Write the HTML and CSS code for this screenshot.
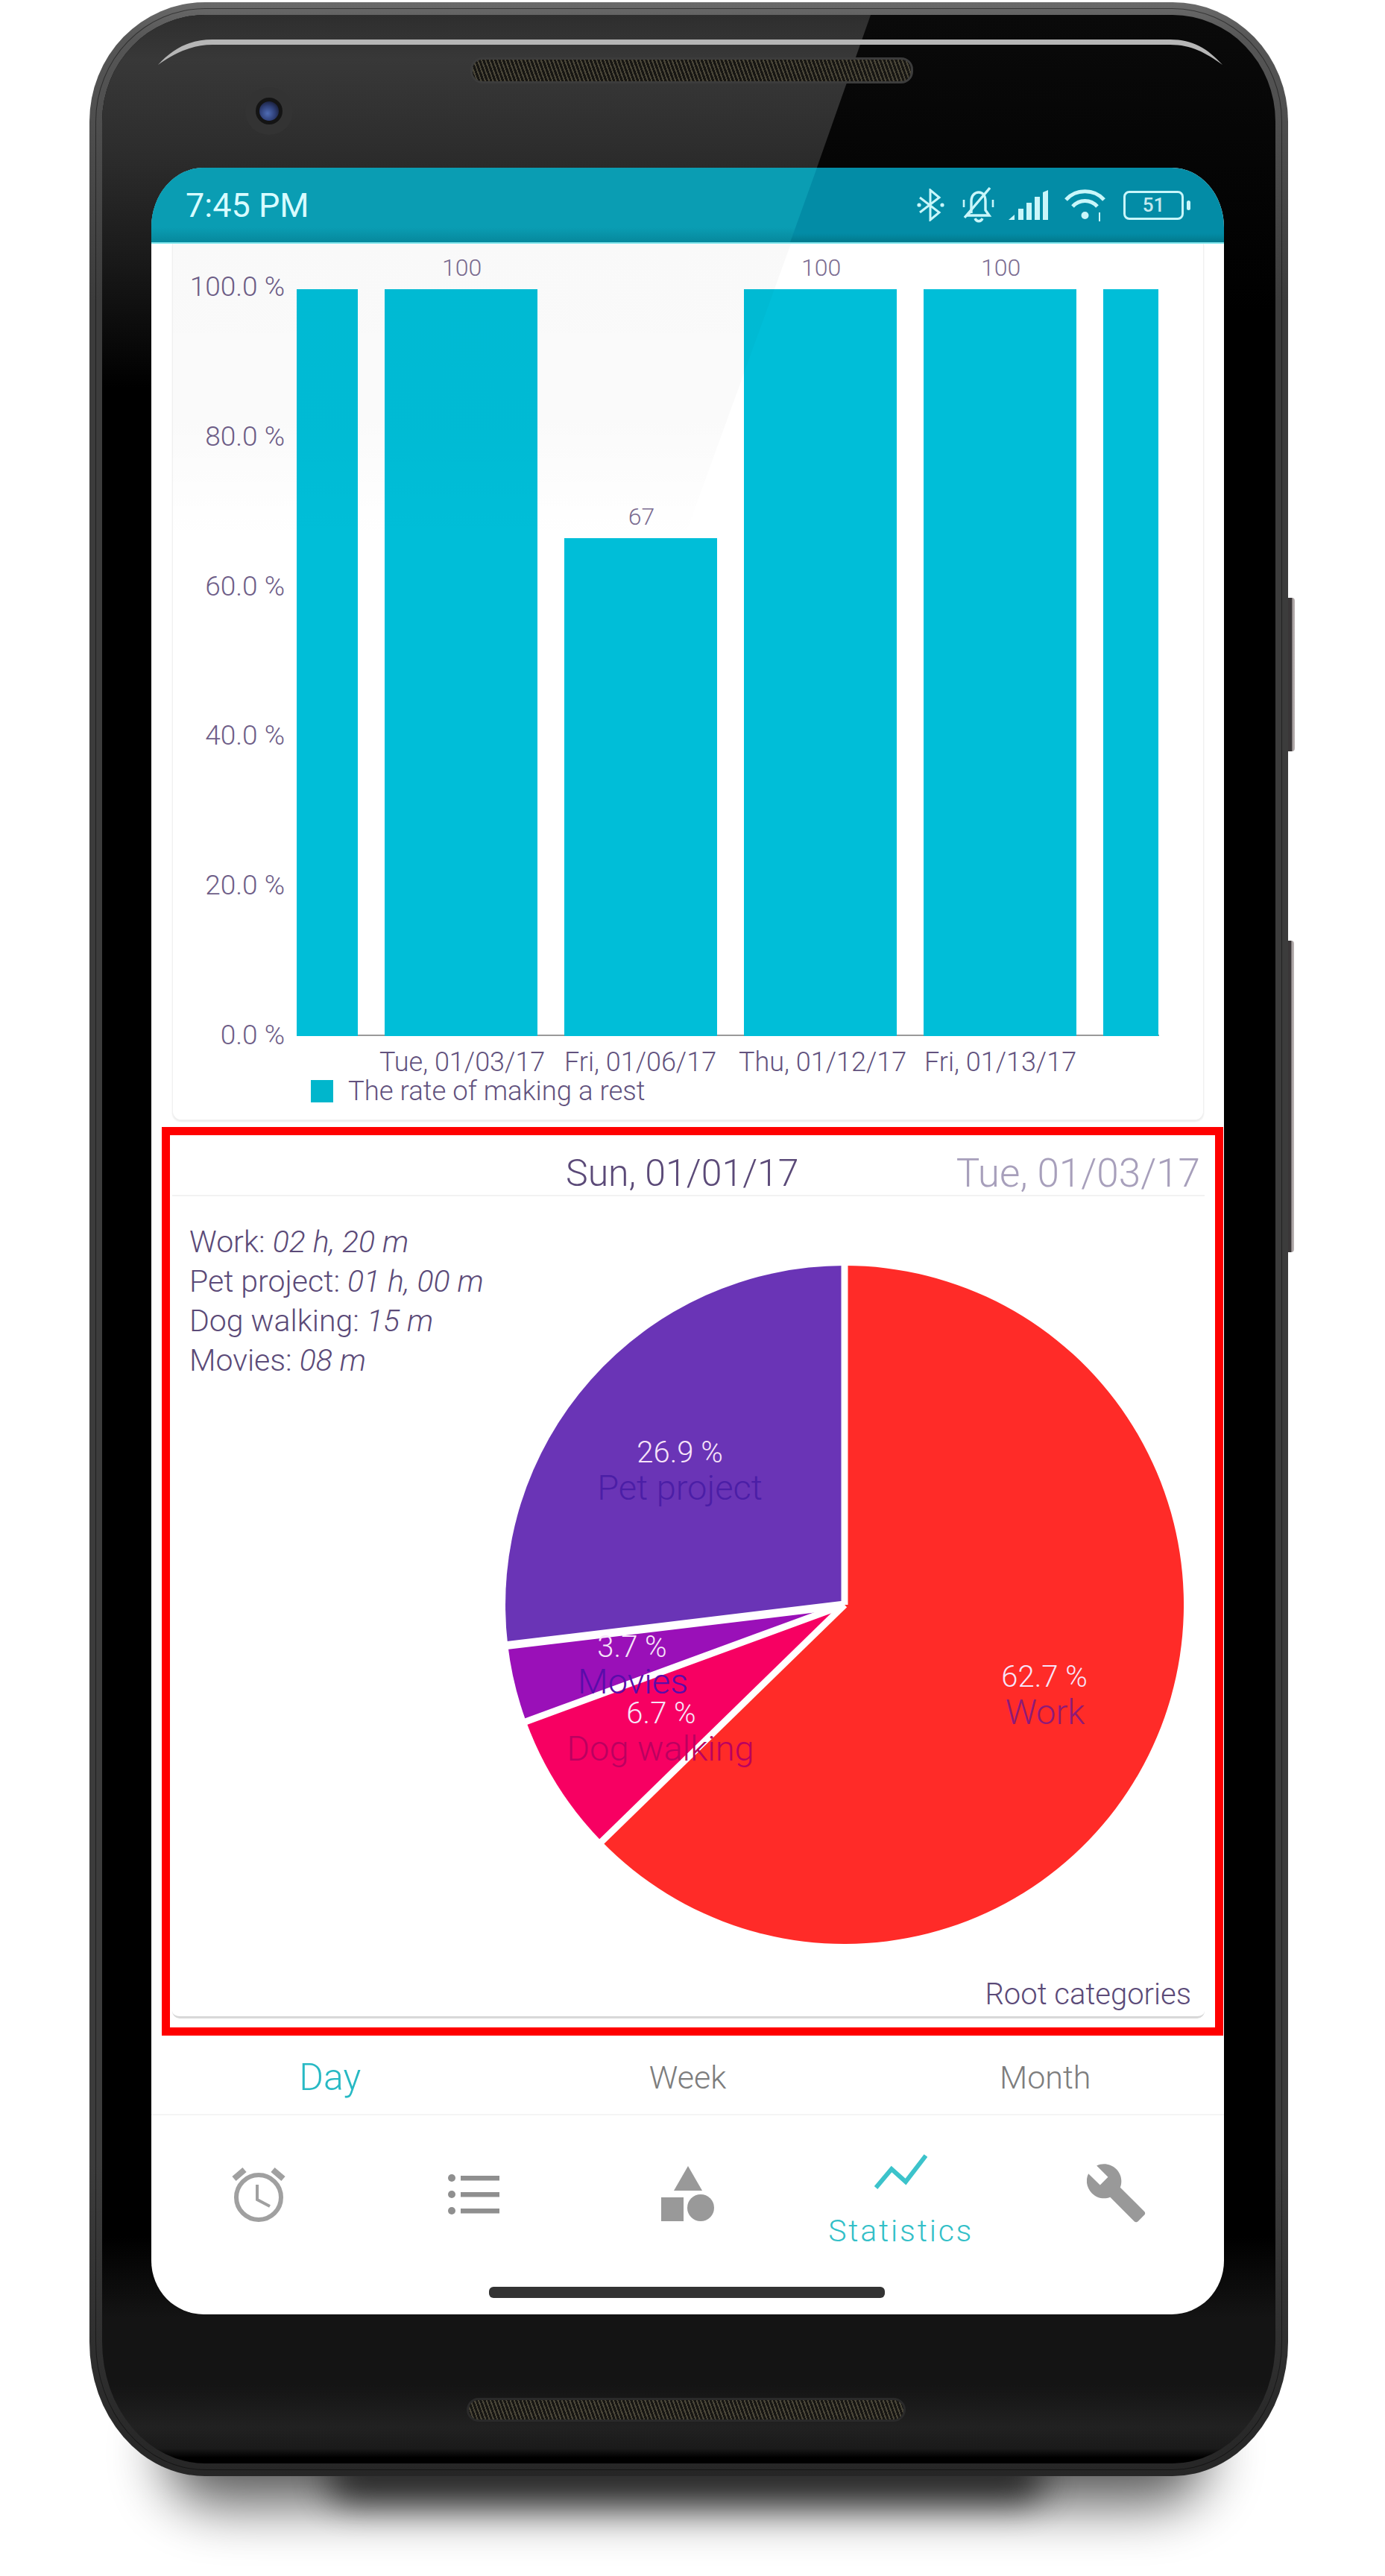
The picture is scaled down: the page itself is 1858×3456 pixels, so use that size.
FILE: index.html
```html
<!DOCTYPE html>
<html lang="en">
<head>
    <meta charset="UTF-8">
    <title>Statistics</title>
    <link rel="stylesheet" href="styles.css">
</head>
<body>
<div class="stage">
    <div class="floor floor-wide"></div>
    <div class="floor floor-core"></div>
    <div class="key key-power"></div>
    <div class="key key-volume"></div>

    <div class="phone">
        <div class="rim-line"></div>
        <div class="bezel-face"><div class="bezel-glare"></div></div>
        <svg class="glass-line" viewBox="0 0 1607 100"><path d="M92 84 C112 62 135 50 165 50 H1450 C1480 50 1500 62 1520 84 C1498 68 1478 57 1450 57 H165 C138 57 115 68 92 84 Z" fill="#b6b6b6"/></svg>
        <div class="speaker speaker-top"></div>
        <div class="camera"><span class="lens"></span></div>
        <div class="speaker speaker-bottom"></div>

        <div class="screen">
            <div class="status">
                <span class="time">7:45 PM</span>
                <div class="status-icons">
                    <svg class="ic-bt" viewBox="0 0 37 44"><path d="M4 12 L30 32 L18 42 L18 2 L30 12 L4 32" fill="none" stroke="#c9f6fa" stroke-width="3"/><circle cx="3" cy="22" r="2.6" fill="#c9f6fa"/><circle cx="34" cy="22" r="2.6" fill="#c9f6fa"/></svg>
                    <svg class="ic-bell" viewBox="0 0 45 50"><path d="M13 36 V20 C13 12 18 8 23 8 C28 8 32 12 32 20 V32 L37 39 H7 L13 33 M18 43 C20 48 26 48 28 43" fill="none" stroke="#c9f6fa" stroke-width="3.4"/><path d="M3 18 V28 M42 18 V28" stroke="#c9f6fa" stroke-width="2.6"/><path d="M4 42 L38 2" stroke="#c9f6fa" stroke-width="3.4"/></svg>
                    <svg class="ic-signal" viewBox="0 0 54 40"><g fill="#c9f6fa"><path d="M0 40 L8 33 V40 Z"/><rect x="13" y="25" width="7" height="15"/><rect x="24" y="17" width="7" height="23"/><rect x="35" y="9" width="7" height="31"/><path d="M46 3 L53 0 V40 H46 Z"/></g></svg>
                    <svg class="ic-wifi" viewBox="0 0 55 44"><g fill="none" stroke="#c9f6fa" stroke-width="5"><path d="M2 15 C15 0 40 0 53 15"/><path d="M11 24 C20 14 35 14 44 24"/></g><circle cx="27.500" cy="36" r="5" fill="#c9f6fa"/><path d="M47 32 V44" stroke="#c9f6fa" stroke-width="2"/></svg>
                    <div class="battery"><span class="battery-level">51</span></div>
                </div>
            </div>

            <div class="rate-card">
                <div class="rate-chart">
                    <div class="y-axis">
                        <span>100.0 %</span><span>80.0 %</span><span>60.0 %</span><span>40.0 %</span><span>20.0 %</span><span>0.0 %</span>
                    </div>
                    <div class="plot">
                        <div class="col col-edge-l"><div class="bar" style="height:1002px"></div></div>
                        <div class="col"><span class="val">100</span><div class="bar" style="height:1002px"></div></div>
                        <div class="col"><span class="val">67</span><div class="bar" style="height:668px"></div></div>
                        <div class="col"><span class="val">100</span><div class="bar" style="height:1002px"></div></div>
                        <div class="col"><span class="val">100</span><div class="bar" style="height:1002px"></div></div>
                        <div class="col col-edge-r"><div class="bar" style="height:1002px"></div></div>
                    </div>
                </div>
                <div class="x-axis">
                    <span>Tue, 01/03/17</span><span>Fri, 01/06/17</span><span>Thu, 01/12/17</span><span>Fri, 01/13/17</span>
                </div>
                <div class="legend"><i class="swatch"></i>The rate of making a rest</div>
            </div>

            <div class="pie-frame">
                <div class="pie-card">
                    <div class="dates">
                        <span class="date-now">Sun, 01/01/17</span>
                        <span class="date-next">Tue, 01/03/17</span>
                    </div>
                    <div class="pie-area">
                        <ul class="totals">
                            <li>Work: <em>02 h, 20 m</em></li>
                            <li>Pet project: <em>01 h, 00 m</em></li>
                            <li>Dog walking: <em>15 m</em></li>
                            <li>Movies: <em>08 m</em></li>
                        </ul>
                        <svg class="pie" viewBox="-455 -455 910 910">
                            <path d="M0 0 L0 -455 A455 455 0 1 1 -325.800 317.600 Z" fill="#ff2b28"/>
                            <path d="M0 0 L-325.800 317.600 A455 455 0 0 1 -427.200 156.600 Z" fill="#f70062"/>
                            <path d="M0 0 L-427.200 156.600 A455 455 0 0 1 -451.700 54.400 Z" fill="#9a10b8"/>
                            <path d="M0 0 L-451.700 54.400 A455 455 0 0 1 0 -455 Z" fill="#6a34b6"/>
                            <g stroke="#fff" stroke-width="9">
                                <path d="M0 0 V-460"/>
                                <path d="M0 0 L-332 323.600"/>
                                <path d="M0 0 L-433 158.700"/>
                                <path d="M0 0 L-460 55.400" stroke-width="11"/>
                            </g>
                        </svg>
                        <span class="slice-pct pct-pet">26.9 %</span>
                        <span class="slice-name name-pet">Pet project</span>
                        <span class="slice-pct pct-movies">3.7 %</span>
                        <span class="slice-name name-movies">Movies</span>
                        <span class="slice-pct pct-dog">6.7 %</span>
                        <span class="slice-name name-dog">Dog walking</span>
                        <span class="slice-pct pct-work">62.7 %</span>
                        <span class="slice-name name-work">Work</span>
                        <span class="root-note">Root categories</span>
                    </div>
                </div>
            </div>

            <div class="tabs">
                <span class="tab tab-on">Day</span>
                <span class="tab">Week</span>
                <span class="tab">Month</span>
            </div>

            <div class="nav">
                <div class="nav-item">
                    <svg class="ic-alarm" viewBox="0 0 74 76"><g fill="none" stroke="#a0a0a0"><circle cx="37" cy="42" r="30" stroke-width="6"/><path d="M35 25 V45 L52 54" stroke-width="4"/><path d="M4 17 L18 5 M70 17 L56 5" stroke-width="8"/></g></svg>
                </div>
                <div class="nav-item">
                    <svg class="ic-list" viewBox="0 0 70 54"><g fill="#8f8f8f"><circle cx="5" cy="5" r="5"/><circle cx="5" cy="27" r="5"/><circle cx="5" cy="49" r="5"/><rect x="17" y="2" width="52" height="6.500"/><rect x="17" y="24" width="52" height="6.500"/><rect x="17" y="46" width="52" height="6.500"/></g></svg>
                </div>
                <div class="nav-item">
                    <svg class="ic-shapes" viewBox="0 0 72 74"><g fill="#999"><path d="M36 0 L55 33 H17 Z"/><rect x="0" y="42" width="30" height="32"/><circle cx="53" cy="56" r="18"/></g></svg>
                </div>
                <div class="nav-item nav-on">
                    <svg class="ic-stats" viewBox="0 0 71 47"><path d="M2 45 L23 20 L42 37 L69 2" fill="none" stroke="#3cc3cb" stroke-width="6"/></svg>
                    <span class="nav-label">Statistics</span>
                </div>
                <div class="nav-item">
                    <svg class="ic-wrench" viewBox="1 1 22.500 22.500"><path d="M22.700 19l-9.100-9.100c.9-2.300.4-5-1.500-6.900-2-2-5-2.400-7.400-1.300L9 6 6 9 1.600 4.700C.4 7.100.9 10.100 2.900 12.100c1.900 1.900 4.600 2.400 6.900 1.500l9.100 9.100c.4.4 1 .4 1.400 0l2.300-2.300c.5-.4.5-1.100.1-1.400z" fill="#999"/></svg>
                </div>
            </div>
            <div class="home-bar"></div>
        </div>
    </div>
</div>
</body>
</html>
```
FILE: styles.css
```css
html,body{
    margin:0; padding:0;
}
body{
    background:#fff; font-family:Roboto,"Liberation Sans",sans-serif; font-weight:300; color:#5b4a78;
}
.stage{
    width:1858px; height:3456px; position:relative; overflow:hidden; padding-top:3px; box-sizing:border-box;
}

/* shadow under the phone */
.floor{
    position:absolute;
}
.floor-wide{
    left:220px; top:3220px; width:1400px; height:140px; background:#000; opacity:.65; filter:blur(38px); border-radius:70px;
}
.floor-core{
    left:440px; top:3290px; width:960px; height:65px; background:#1c1c1c; opacity:.9; filter:blur(24px); border-radius:30px;
}

/* side keys */
.key{
    position:absolute; width:10px; background:linear-gradient(90deg,#3a3638,#3a3638 55%,#a39c9c 70%,#bdb6b6);
    border-radius:0 4px 4px 0;
}
.key-power{
    left:1727px; top:802px; height:206px;
}
.key-volume{
    left:1726px; top:1262px; height:418px;
}

/* phone body */
.phone{
    position:relative; width:1608px; height:3319px; margin-left:120px; box-sizing:border-box; padding:222px 86px 0 83px;
    border-radius:155px 155px 155px 155px / 160px 160px 180px 180px;
    background:linear-gradient(#6a6a6a 0,#565656 50px,#3c3c3c 400px,#3c3c3c 2900px,#262626 100%);
}
.rim-line{
    position:absolute; left:8px; top:8px; right:8px; bottom:8px; border:1px solid rgba(0,0,0,.45); border-radius:147px 147px 147px 147px / 152px 152px 172px 172px;
}
.bezel-face{
    position:absolute; left:17px; top:17px; right:17px; bottom:17px; overflow:hidden;
    border-radius:138px 138px 138px 138px / 143px 143px 163px 163px;
    background:linear-gradient(#0a0a0a 0,#000 400px,#000 2980px,#141414 3090px,#141414 3180px,#212121 3237px,#1a1a1a 3265px,#000 3277px);
}
.bezel-glare{
    height:500px; clip-path:polygon(0 0,1031px 0,855px 500px,0 500px);
    background:linear-gradient(#2e2e2e 0,#383838 60px,#2c2c2c 190px,#1c1c1c 310px,#000 100%);
}
.glass-line{
    position:absolute; left:0; top:0; width:1607px; height:100px;
}
.speaker{
    position:absolute; border-radius:16px; box-sizing:border-box; border:3px solid #3c3c3c;
    background:repeating-linear-gradient(70deg,#4a4638 0 2px,#171613 2px 5px);
}
.speaker-top{
    left:511px; top:74px; width:594px; height:35px;
}
.speaker-bottom{
    left:506px; top:3214px; width:589px; height:32px; border-color:#2a2a2a;
}
.camera{
    position:absolute; left:209px; top:114px; width:64px; height:64px; border-radius:50%; background:#333; display:flex; align-items:center; justify-content:center;
}
.lens{
    width:26px; height:26px; border-radius:50%; border:5px solid #141414; background:radial-gradient(circle at 42% 62%,#4f6cb4,#2f4078 45%,#15182c 85%);
}

/* screen */
.screen{
    position:relative; width:1439px; height:2880px; background:#fff; overflow:hidden;
    border-radius:70px 70px 70px 70px / 80px 80px 72px 72px; display:flex; flex-direction:column;
}
.status{
    height:102px; flex:none; box-sizing:border-box; padding:0 54px 0 46px; display:flex; align-items:center; justify-content:space-between;
    background:linear-gradient(#038ca6 88%,#027c90 98%); border-bottom:2px solid #7fe5ec; position:relative;
}
.status:before{
    content:""; position:absolute; left:0; top:0; bottom:0; width:900px; clip-path:polygon(0 0,893px 0,857px 100%,0 100%);
    background:linear-gradient(#0a9db3 80%,#078a9e 98%);
}
.time,.status-icons{
    position:relative;
}
.time{
    font-size:45px; font-weight:400; color:#d8fbff;
}
.status-icons{
    display:flex; align-items:center;
}
.ic-bt{
    width:37px; height:44px; margin-right:23px;
}
.ic-bell{
    width:45px; height:50px; margin-right:18px;
}
.ic-signal{
    width:54px; height:40px; margin-right:21px;
}
.ic-wifi{
    width:55px; height:44px; margin-right:24px;
}
.battery{
    width:81px; height:39px; box-sizing:border-box; border:3px solid #c9f6fa; border-radius:8px; position:relative; display:flex; align-items:center; justify-content:center;
}
.battery:after{
    content:""; position:absolute; right:-12px; top:10px; width:5px; height:13px; background:#c9f6fa; border-radius:3px;
}
.battery-level{
    font-size:26px; font-weight:500; color:#c4e9ee;
}

/* bar chart */
.rate-card{
    flex:none; height:1176px; box-sizing:border-box; margin:0 27px 9px 28px; background:#fff;
    border:1px solid #f0f0f0; border-top:0; border-radius:0 0 12px 12px; box-shadow:0 2px 2px #ececec; position:relative;
}
.rate-card:after{
    content:""; position:absolute; left:0; top:0; width:830px; height:400px; clip-path:polygon(0 0,829px 0,684px 400px,0 400px);
    background:linear-gradient(rgba(0,0,0,.025),rgba(0,0,0,.02) 60%,rgba(0,0,0,0));
}
.rate-chart{
    display:flex; height:1063px;
}
.y-axis{
    width:150px; flex:none; box-sizing:border-box; padding:37px 0 0; height:1083px; display:flex; flex-direction:column; justify-content:space-between; align-items:flex-end; font-size:37px; color:#6e5e88; line-height:42px; white-space:nowrap;
}
.plot{
    margin-left:16px; display:flex; gap:36px; align-items:flex-end; height:1063px; box-sizing:border-box; width:1157px;
    background:linear-gradient(#999,#999) bottom/100% 2px no-repeat;
}
.col{
    width:205px; display:flex; flex-direction:column; align-items:center; justify-content:flex-end;
}
.col-edge-l{
    width:82px;
}
.col-edge-r{
    width:74px;
}
.val{
    font-size:32px; color:#7b6c91; line-height:38px; margin:0 0 10px 2px;
}
.bar{
    width:100%; background:#00bed8;
}
.x-axis{
    position:relative; height:46px; margin-top:12px; font-size:36px; line-height:46px; color:#62527e;
}
.x-axis span{
    position:absolute; top:0; white-space:nowrap;
}
.x-axis span:nth-child(1){ left:277px; }
.x-axis span:nth-child(2){ left:525px; }
.x-axis span:nth-child(3){ left:759px; }
.x-axis span:nth-child(4){ left:1008px; }
.legend{
    display:flex; align-items:center; font-size:36.500px; line-height:42px; color:#62527e; margin:-5px 0 0 185px;
}
.swatch{
    width:30px; height:30px; background:#00b6cc; margin-right:20px;
}

/* red frame with pie card */
.pie-frame{
    flex:none; height:1219px; box-sizing:border-box; margin:0 1px 0 14px; border:11px solid #f00; padding:0 14px 0 3px; background:#fff;
}
.pie-card{
    height:1185px; border-bottom:3px solid #d8d8d8; border-radius:0 0 10px 10px; box-sizing:border-box;
}
.dates{
    height:82px; box-sizing:border-box; border-bottom:2px solid #f2f2f2; position:relative; font-size:50px; line-height:58px; color:#5b4a78;
}
.date-now{
    position:absolute; left:528px; top:22px;
}
.date-next{
    position:absolute; right:6px; top:22px; font-size:53px; color:#a79fbb;
}
.pie-area{
    position:relative; height:1097px;
}
.totals{
    list-style:none; margin:0; padding:35px 0 0 23px; font-size:41px; line-height:53px; color:#5b4a78;
}
.totals em{
    font-style:italic;
}
.pie{
    position:absolute; left:447px; top:93px; width:910px; height:910px;
}
.slice-pct,.slice-name{
    position:absolute; white-space:nowrap; transform:translateX(-50%); line-height:38px;
}
.slice-pct{
    font-size:40px; font-weight:300; color:#f7e4f9;
}
.slice-name{
    font-size:47px; color:#4b1ea6;
}
.pct-pet{ left:681px; top:325px; }
.name-pet{ left:681px; top:372px; }
.pct-movies{ left:617px; top:586px; }
.name-movies{ left:618px; top:632px; color:#5a0caa; }
.pct-dog{ left:656px; top:675px; }
.name-dog{ left:655px; top:722px; color:#bb0060; }
.pct-work{ left:1170px; top:626px; }
.name-work{ left:1171px; top:673px; color:#8f1a78; }
.root-note{
    position:absolute; right:18px; bottom:3px; font-size:40px; line-height:46px; color:#5b4a78;
}

/* tabs */
.tabs{
    flex:none; height:107px; box-sizing:border-box; border-bottom:2px solid #f5f5f5; padding-top:6px; display:flex; align-items:center; font-size:43px; color:#7d7d7d;
}
.tab{
    width:480px; text-align:center; line-height:60px;
}
.tab-on{
    font-size:50px; color:#27b9c4;
}

/* bottom nav */
.nav{
    flex:none; height:168px; display:flex; padding:0 4px; box-sizing:border-box;
}
.nav-item{
    flex:1; display:flex; flex-direction:column; align-items:center; padding-top:68px;
}
.nav-item svg{
    flex:none;
}
.nav-on{
    padding-top:52px;
}
.nav-label{
    flex:none; font-size:41px; font-weight:300; color:#33bfc8; line-height:46px; margin-top:33px; letter-spacing:2.800px;
}
.ic-alarm{
    width:74px; height:76px; margin-left:-6px;
}
.ic-list{
    width:70px; height:54px; margin-top:11px;
}
.ic-shapes{
    width:72px; height:74px;
}
.ic-stats{
    width:71px; height:47px;
}
.ic-wrench{
    width:80px; height:80px; margin:-3px 0 0 6px;
}
.home-bar{
    width:531px; height:15px; background:#333; border-radius:6px; margin:62px 0 0 453px;
}
```
